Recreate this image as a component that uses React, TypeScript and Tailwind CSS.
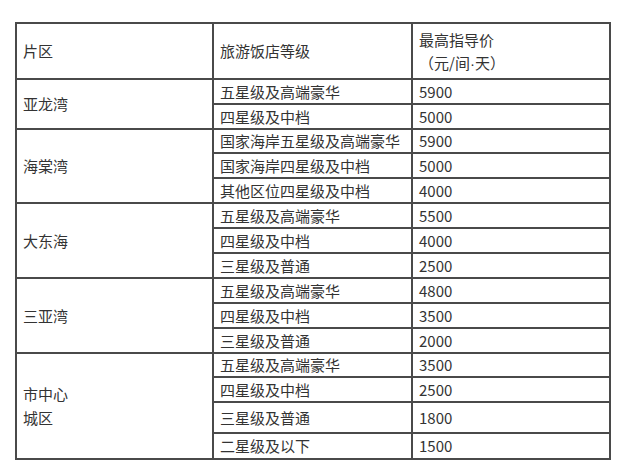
import React from "react";

type Row = { region?: string[]; span?: number; level: string; price: string; h: number };

const ROWS: Row[] = [
  { region: ["亚龙湾"], span: 2, level: "五星级及高端豪华", price: "5900", h: 25 },
  { level: "四星级及中档", price: "5000", h: 25 },
  { region: ["海棠湾"], span: 3, level: "国家海岸五星级及高端豪华", price: "5900", h: 24 },
  { level: "国家海岸四星级及中档", price: "5000", h: 25 },
  { level: "其他区位四星级及中档", price: "4000", h: 25 },
  { region: ["大东海"], span: 3, level: "五星级及高端豪华", price: "5500", h: 25 },
  { level: "四星级及中档", price: "4000", h: 25 },
  { level: "三星级及普通", price: "2500", h: 25 },
  { region: ["三亚湾"], span: 3, level: "五星级及高端豪华", price: "4800", h: 25 },
  { level: "四星级及中档", price: "3500", h: 25 },
  { level: "三星级及普通", price: "2000", h: 25 },
  { region: ["市中心", "城区"], span: 4, level: "五星级及高端豪华", price: "3500", h: 24 },
  { level: "四星级及中档", price: "2500", h: 25 },
  { level: "三星级及普通", price: "1800", h: 31 },
  { level: "二星级及以下", price: "1500", h: 26 },
];

const cell = "border-2 border-[#4a4a4a] px-[6px] py-0 align-middle leading-[20px]";

export default function App() {
  return (
    <div
      className="w-[627px] h-[473px] bg-white pt-[22px] pl-[15px] text-[15px] text-[#333333]"
      style={{ fontFamily: '"Noto Sans CJK SC", "Noto Sans", sans-serif' }}
    >
      <table className="w-[596px] table-fixed border-collapse">
        <colgroup>
          <col className="w-[197px]" />
          <col className="w-[199px]" />
          <col className="w-[198px]" />
        </colgroup>
        <tbody>
          <tr className="h-[56px]">
            <td className={cell}>片区</td>
            <td className={cell}>旅游饭店等级</td>
            <td className={cell + " leading-[23px]"}>
              <div>最高指导价</div>
              <div>
                （元/间<span style={{ fontFamily: '"Liberation Sans", sans-serif' }}>·</span>天）
              </div>
            </td>
          </tr>
          {ROWS.map((r, i) => (
            <tr key={i} style={{ height: r.h }}>
              {r.region && (
                <td className={cell + " leading-[24px]"} rowSpan={r.span}>
                  {r.region.map((t) => (
                    <div key={t}>{t}</div>
                  ))}
                </td>
              )}
              <td className={cell + " whitespace-nowrap"}>{r.level}</td>
              <td className={cell}>{r.price}</td>
            </tr>
          ))}
        </tbody>
      </table>
    </div>
  );
}
